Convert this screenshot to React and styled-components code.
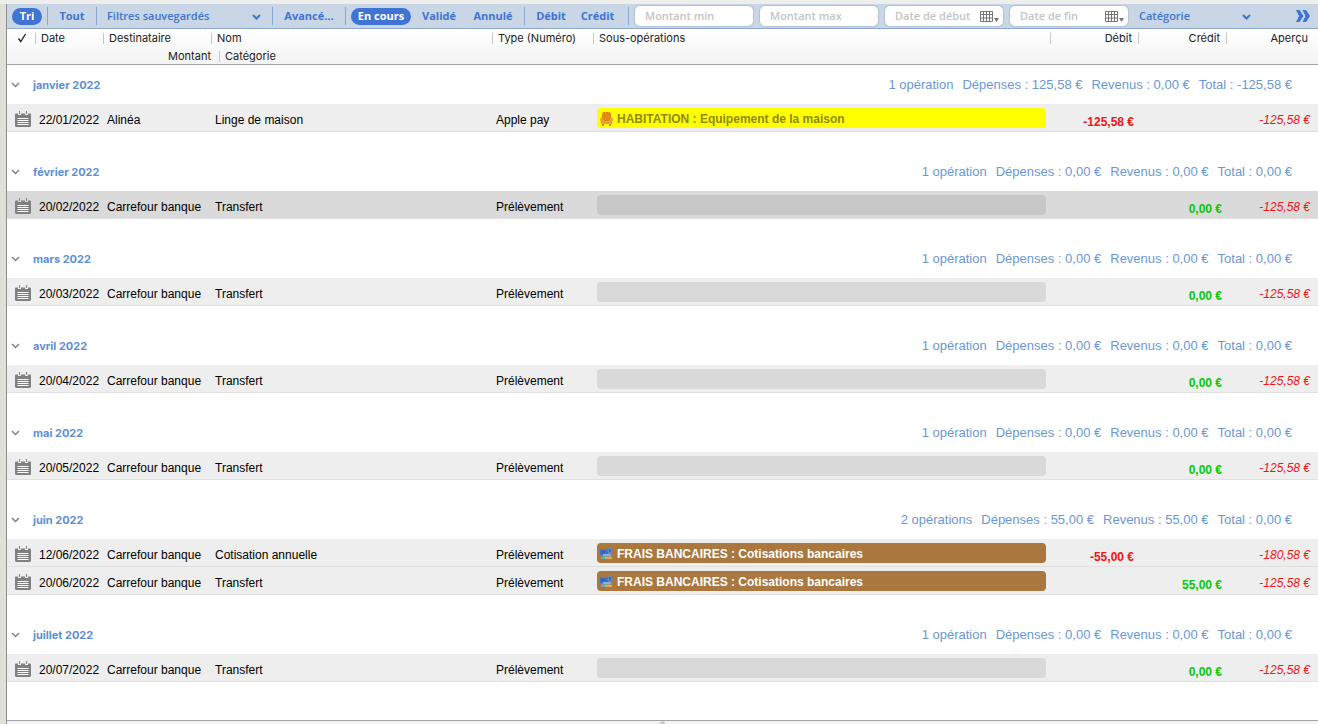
import React from 'react';
import styled, { createGlobalStyle } from 'styled-components';

const colors = {
  blue: '#3f74d4',
  toolbar: '#c8d6e5',
  toolbarLine: '#8fa9cc',
  group: '#5d8fd3',
  summary: '#6a98d6',
  row: '#eeeeee',
  rowSelected: '#dadada',
  red: '#f01414',
  green: '#06c806',
};

const fonts = {
  toolbar: '"Open Sans", "Noto Sans", sans-serif',
  header: 'Inter, sans-serif',
  body: '"Liberation Sans", Arial, sans-serif',
};

const GlobalStyle = createGlobalStyle`
  * {
    box-sizing: border-box;
  }
  body {
    margin: 0;
    background: #fff;
    font-family: ${fonts.body};
    font-size: 12px;
    color: #000;
  }
  button,
  input,
  select {
    margin: 0;
    padding: 0;
    border: 0;
    background: none;
    font: inherit;
    color: inherit;
  }
`;

const Window = styled.div`
  display: flex;
  flex-direction: column;
  min-height: 100vh;
  padding-top: 4px;
  background: #eeeeec;
`;

const Content = styled.main`
  display: flex;
  flex: 1;
  flex-direction: column;
  margin-left: 6px;
  border-left: 1px solid #8e8e8e;
  box-shadow: -6px 0 0 #e0e0d8;
  background: #fff;
`;

const Toolbar = styled.div`
  display: flex;
  align-items: center;
  height: 25px;
  border-bottom: 1px solid ${colors.toolbarLine};
  background: ${colors.toolbar};
  color: ${colors.blue};
  font-family: ${fonts.toolbar};
  font-size: 11px;
  font-weight: 700;
`;

const ToolGroup = styled.div`
  display: flex;
  align-items: center;
  height: 18px;
  padding: 0 5px;
  border-right: 1px solid #87a5d2;
`;

const FilterButton = styled.button`
  width: ${({ $width }) => $width}px;
  height: 17px;
  padding-bottom: 2px;
  border-radius: 9px;
  line-height: 15px;
  white-space: nowrap;
  background: ${({ $active }) => ($active ? colors.blue : 'transparent')};
  color: ${({ $active }) => ($active ? '#fff' : 'inherit')};
`;

const SelectBox = styled.label`
  display: grid;
  flex: ${({ $width }) => ($width ? 'none' : '1')};
  width: ${({ $width }) => ($width ? `${$width}px` : 'auto')};
  align-items: center;
  select,
  svg {
    grid-area: 1 / 1;
  }
  select {
    height: 17px;
    padding: 0 20px 2px 5px;
    appearance: none;
    outline: none;
    font-weight: 600;
  }
  svg {
    justify-self: end;
    margin-right: 6px;
    pointer-events: none;
  }
`;

const Fields = styled.div`
  display: flex;
  gap: 7px;
  padding: 0 6px;
`;

const Field = styled.div`
  display: flex;
  align-items: center;
  width: 118px;
  height: 20px;
  padding: 0 4px 0 10px;
  border-radius: 5px;
  background: #fff;
  box-shadow: 0 0 1px 1px #b3c1d1;
  input {
    flex: 1;
    min-width: 0;
    padding-bottom: 2px;
    outline: none;
    color: #444;
  }
  input::placeholder {
    color: #c4c4c4;
    font-weight: 600;
    opacity: 1;
  }
  button {
    display: flex;
  }
`;

const MoreButton = styled.button`
  display: flex;
  padding: 0 8px 0 0;
`;

const Table = styled.table`
  width: 100%;
  border-collapse: separate;
  border-spacing: 0;
  table-layout: fixed;
  thead {
    background: linear-gradient(#fff, #f3f3f3);
    font-family: ${fonts.header};
    font-size: 11px;
    color: #222;
  }
`;

const HeadCell = styled.th`
  height: 18px;
  padding: ${({ $last }) => ($last ? '2px 0 0' : '0')};
  border-bottom: ${({ $last }) => ($last ? '1px solid #a6a6a6' : '0')};
  font-weight: 400;
  line-height: ${({ $last }) => ($last ? '15px' : '18px')};
  text-align: left;
  white-space: nowrap;
  span {
    display: inline-block;
    height: 11px;
    padding-left: 5px;
    border-left: 1px solid #c6c6c6;
    line-height: 11px;
  }
`;

const CheckHeadCell = styled(HeadCell)`
  padding-left: 10px;
  svg {
    display: block;
  }
`;

const NumberHeadCell = styled(HeadCell)`
  text-align: right;
  span {
    display: block;
    padding-right: ${({ $edge }) => ($edge ? '10px' : '6px')};
  }
`;

const AmountHeadCell = styled(HeadCell)`
  text-align: right;
`;

const CategoryHeadCell = styled(HeadCell)`
  padding-left: 8px;
`;

const GroupCell = styled.th`
  padding: ${({ $first }) => ($first ? '0' : '20px')} 26px 0 4px;
  font-weight: 400;
  text-align: left;
`;

const GroupLine = styled.div`
  display: flex;
  align-items: center;
  height: 39px;
  color: ${colors.group};
`;

const GroupToggle = styled.button`
  display: flex;
  align-items: center;
  gap: 13px;
  font-family: ${fonts.header};
  font-size: 11px;
  font-weight: 700;
  line-height: 14px;
`;

const GroupSummary = styled.div`
  display: flex;
  gap: 9px;
  margin-left: auto;
  color: ${colors.summary};
  font-size: 13px;
  line-height: 16px;
`;

const OperationRow = styled.tr`
  background: ${({ $selected }) => ($selected ? colors.rowSelected : colors.row)};
`;

const Cell = styled.td`
  height: 28px;
  padding: 5px 0 0 4px;
  border-bottom: 1px solid #e0e0e0;
  overflow: hidden;
  line-height: 16px;
  white-space: nowrap;
`;

const IconCell = styled(Cell)`
  padding: 3px 0 0 8px;
  svg {
    display: block;
  }
`;

const TagCell = styled(Cell)`
  padding: 0 4px;
`;

const Tag = styled.div`
  display: flex;
  align-items: center;
  gap: 4px;
  height: 20px;
  padding: 2px 3px 0;
  border-radius: 4px;
  background: ${({ $background }) => $background};
  color: ${({ $color }) => $color};
  font-weight: 700;
`;

const Amount = styled(Cell)`
  padding: 9px 4px 0 0;
  color: ${({ $color }) => $color};
  font-weight: 700;
  text-align: right;
`;

const Preview = styled(Cell)`
  padding: 5px 8px 0 0;
  color: ${colors.red};
  font-style: italic;
  text-align: right;
`;

const Footer = styled.div`
  display: flex;
  justify-content: center;
  height: 4px;
  margin-top: auto;
  overflow: hidden;
  border-top: 1px solid #a6a6a6;
  background: #f4f4f4;
`;

const Grip = styled.div`
  width: 5px;
  height: 5px;
  border-radius: 50%;
  background: #c8c8c8;
`;

const ChevronIcon = ({ color = '#808080', width = 1.5 }) => (
  <svg width="9" height="7" viewBox="0 0 9 7" fill="none" stroke={color} strokeWidth={width}>
    <path d="M1 2 4.500 5.500 8 2" />
  </svg>
);

const CheckIcon = () => (
  <svg width="10" height="10" viewBox="0 0 10 10" fill="none" stroke="#222" strokeWidth="1.300">
    <path d="M1.500 5.500 3.800 8.500 8.500 1" />
  </svg>
);

const CalendarIcon = () => (
  <svg width="16" height="16" viewBox="0 0 16 16">
    <path
      fill="#808080"
      d="M0 5h16v9.500a1.500 1.500 0 0 1-1.500 1.500h-13A1.500 1.500 0 0 1 0 14.500zM0 5V3.500A1 1 0 0 1 1 2.500H3V4h3V2.500h4V4h3V2.500h2a1 1 0 0 1 1 1V5z"
    />
    <path stroke="#808080" d="M4.500 0v3M11.500 0v3" />
    <path stroke="#fff" d="M2.500 7.500h11M2.500 9.500h11M2.500 11.500h11M2.500 13.500h11" />
  </svg>
);

const DatePickerIcon = () => (
  <svg width="19" height="13" viewBox="0 0 19 13">
    <path fill="none" stroke="#777" d="M.5 1.500h12v10H.5zM.5 4.500h12M.5 8h12M3.500 1.500v10M6.500 1.500v10M9.500 1.500v10" />
    <path fill="#777" d="M14 8h5l-2.500 4z" />
  </svg>
);

const ArmchairIcon = () => (
  <svg width="13" height="14" viewBox="0 0 13 14">
    <rect x="2" y="0" width="9" height="9" rx="2" fill="#e08c10" />
    <path fill="#eda035" d="M0 7a1.500 1.500 0 0 1 3 0v2h7V7a1.500 1.500 0 0 1 3 0l-1 5H1z" />
    <path fill="#ee9a4c" d="M2 9h9v3H2z" />
    <path fill="#c98a4a" d="M2 12h2v2H2zM9 12h2v2H9z" />
  </svg>
);

const BankIcon = () => (
  <svg width="13" height="12" viewBox="0 0 13 12">
    <path fill="#3f6fc4" d="M0 1.500h8V7H0z" />
    <path fill="#7fb2e6" d="M3 6h8v2.500H3z" />
    <circle cx="10" cy="2.500" r="2.500" fill="#4f8fd8" />
    <path fill="#234a8c" d="M9.500 1h1v3h-1zM1.500 3.500h3v1h-3z" />
    <path fill="#5fb0b0" d="M1 8.500h6V11H1z" />
    <path fill="#f0a63a" d="M5 9h7v2H5z" />
  </svg>
);

const tags = {
  home: {
    label: 'HABITATION : Equipement de la maison',
    background: '#ffff00',
    color: '#8f8a10',
    icon: <ArmchairIcon />,
  },
  bank: {
    label: 'FRAIS BANCAIRES : Cotisations bancaires',
    background: '#aa773f',
    color: '#fff',
    icon: <BankIcon />,
  },
};

const transfer = (date, extra) => ({
  date,
  payee: 'Carrefour banque',
  name: 'Transfert',
  type: 'Prélèvement',
  credit: '0,00 €',
  preview: '-125,58 €',
  ...extra,
});

const emptySummary = ['1 opération', 'Dépenses : 0,00 €', 'Revenus : 0,00 €', 'Total : 0,00 €'];

const months = [
  {
    title: 'janvier 2022',
    summary: ['1 opération', 'Dépenses : 125,58 €', 'Revenus : 0,00 €', 'Total : -125,58 €'],
    operations: [
      {
        date: '22/01/2022',
        payee: 'Alinéa',
        name: 'Linge de maison',
        type: 'Apple pay',
        tag: 'home',
        debit: '-125,58 €',
        preview: '-125,58 €',
      },
    ],
  },
  {
    title: 'février 2022',
    summary: emptySummary,
    operations: [transfer('20/02/2022', { selected: true })],
  },
  { title: 'mars 2022', summary: emptySummary, operations: [transfer('20/03/2022')] },
  { title: 'avril 2022', summary: emptySummary, operations: [transfer('20/04/2022')] },
  { title: 'mai 2022', summary: emptySummary, operations: [transfer('20/05/2022')] },
  {
    title: 'juin 2022',
    summary: ['2 opérations', 'Dépenses : 55,00 €', 'Revenus : 55,00 €', 'Total : 0,00 €'],
    operations: [
      {
        date: '12/06/2022',
        payee: 'Carrefour banque',
        name: 'Cotisation annuelle',
        type: 'Prélèvement',
        tag: 'bank',
        debit: '-55,00 €',
        preview: '-180,58 €',
      },
      transfer('20/06/2022', { tag: 'bank', credit: '55,00 €' }),
    ],
  },
  { title: 'juillet 2022', summary: emptySummary, operations: [transfer('20/07/2022')] },
];

// the name column takes the remaining width
const columnWidths = [28, 68, 108, null, 101, 457, 88, 88, 92];

const CategoryTag = ({ tag, selected }) => {
  if (!tag) {
    return <Tag $background={selected ? '#c7c7c7' : '#d9d9d9'} />;
  }
  const { label, background, color, icon } = tags[tag];
  return (
    <Tag $background={background} $color={color}>
      {icon}
      {label}
    </Tag>
  );
};

const Operation = ({ operation }) => {
  const { date, payee, name, type, tag, debit, credit, preview, selected } = operation;
  return (
    <OperationRow $selected={selected} aria-selected={!!selected}>
      <IconCell>
        <CalendarIcon />
      </IconCell>
      <Cell>{date}</Cell>
      <Cell>{payee}</Cell>
      <Cell>{name}</Cell>
      <Cell>{type}</Cell>
      <TagCell>
        <CategoryTag tag={tag} selected={selected} />
      </TagCell>
      <Amount $color={colors.red}>{debit}</Amount>
      <Amount $color={colors.green}>{credit}</Amount>
      <Preview>{preview}</Preview>
    </OperationRow>
  );
};

const Month = ({ month, first }) => (
  <tbody>
    <tr>
      <GroupCell colSpan={9} $first={first}>
        <GroupLine>
          <GroupToggle type="button" aria-expanded="true">
            <ChevronIcon />
            {month.title}
          </GroupToggle>
          <GroupSummary>
            {month.summary.map(text => (
              <span key={text}>{text}</span>
            ))}
          </GroupSummary>
        </GroupLine>
      </GroupCell>
    </tr>
    {month.operations.map(operation => (
      <Operation key={operation.date} operation={operation} />
    ))}
  </tbody>
);

const FilterBar = () => (
  <Toolbar>
    <ToolGroup>
      <FilterButton $width={30} $active>
        Tri
      </FilterButton>
    </ToolGroup>
    <ToolGroup>
      <FilterButton $width={38}>Tout</FilterButton>
    </ToolGroup>
    <ToolGroup>
      <SelectBox $width={165}>
        <select aria-label="Filtres sauvegardés">
          <option>Filtres sauvegardés</option>
        </select>
        <ChevronIcon color={colors.blue} width={2} />
      </SelectBox>
    </ToolGroup>
    <ToolGroup>
      <FilterButton $width={62}>Avancé...</FilterButton>
    </ToolGroup>
    <ToolGroup>
      <FilterButton $width={60} $active>
        En cours
      </FilterButton>
      <FilterButton $width={56}>Validé</FilterButton>
      <FilterButton $width={52}>Annulé</FilterButton>
    </ToolGroup>
    <ToolGroup>
      <FilterButton $width={42}>Débit</FilterButton>
      <FilterButton $width={51}>Crédit</FilterButton>
    </ToolGroup>
    <Fields>
      <Field>
        <input aria-label="Montant min" placeholder="Montant min" />
      </Field>
      <Field>
        <input aria-label="Montant max" placeholder="Montant max" />
      </Field>
      <Field>
        <input aria-label="Date de début" placeholder="Date de début" />
        <button type="button" aria-label="Choisir la date de début">
          <DatePickerIcon />
        </button>
      </Field>
      <Field>
        <input aria-label="Date de fin" placeholder="Date de fin" />
        <button type="button" aria-label="Choisir la date de fin">
          <DatePickerIcon />
        </button>
      </Field>
    </Fields>
    <SelectBox>
      <select aria-label="Catégorie">
        <option>Catégorie</option>
      </select>
      <ChevronIcon color={colors.blue} width={2} />
    </SelectBox>
    <MoreButton type="button" aria-label="Plus de filtres">
      <svg width="53" height="12" viewBox="1 0 53 12" fill={colors.blue}>
        <path d="M40 0h3.500l4 6-4 6H40l3-6zM46.500 0H50l4 6-4 6h-3.500l3-6z" />
      </svg>
    </MoreButton>
  </Toolbar>
);

const TableHead = () => (
  <thead>
    <tr>
      <CheckHeadCell aria-label="Validé">
        <CheckIcon />
      </CheckHeadCell>
      <HeadCell>
        <span>Date</span>
      </HeadCell>
      <HeadCell>
        <span>Destinataire</span>
      </HeadCell>
      <HeadCell>
        <span>Nom</span>
      </HeadCell>
      <HeadCell>
        <span>Type (Numéro)</span>
      </HeadCell>
      <HeadCell>
        <span>Sous-opérations</span>
      </HeadCell>
      <NumberHeadCell>
        <span>Débit</span>
      </NumberHeadCell>
      <NumberHeadCell>
        <span>Crédit</span>
      </NumberHeadCell>
      <NumberHeadCell $edge>
        <span>Aperçu</span>
      </NumberHeadCell>
    </tr>
    <tr>
      <AmountHeadCell colSpan={3} $last>
        Montant
      </AmountHeadCell>
      <CategoryHeadCell colSpan={6} $last>
        <span>Catégorie</span>
      </CategoryHeadCell>
    </tr>
  </thead>
);

const App = () => (
  <>
    <GlobalStyle />
    <Window>
      <Content>
        <FilterBar />
        <Table>
          <colgroup>
            {columnWidths.map((width, index) => (
              <col key={index} width={width || undefined} />
            ))}
          </colgroup>
          <TableHead />
          {months.map((month, index) => (
            <Month key={month.title} month={month} first={index === 0} />
          ))}
        </Table>
        <Footer>
          <Grip />
        </Footer>
      </Content>
    </Window>
  </>
);

export default App;
